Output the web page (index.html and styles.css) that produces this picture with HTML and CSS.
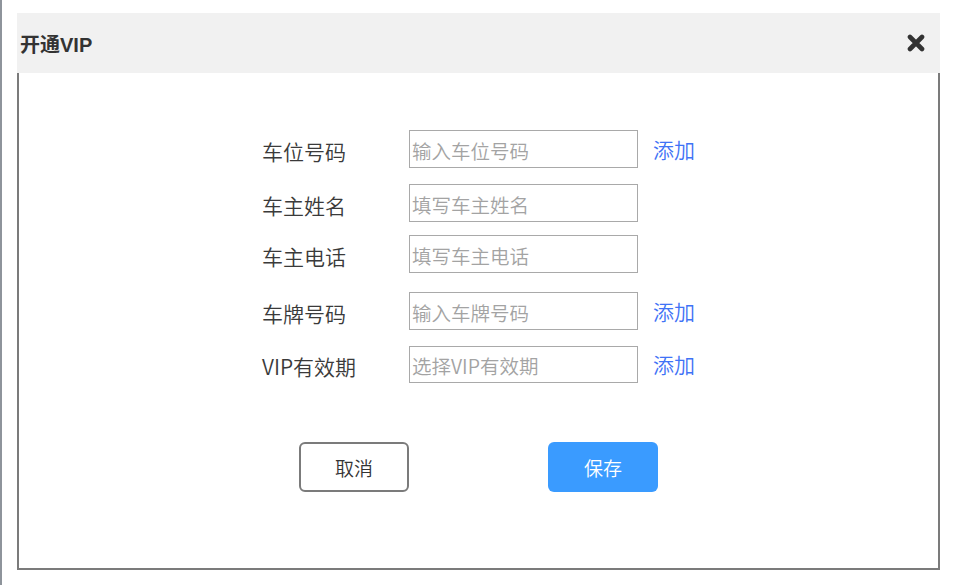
FILE: index.html
```html
<!DOCTYPE html>
<html lang="zh-CN">
<head>
<meta charset="utf-8">
<title>开通VIP</title>
<link rel="stylesheet" href="styles.css">
</head>
<body>
<div class="dialog">
  <div class="dialog-header">
    <span class="dialog-title">开通VIP</span>
    <button class="close-btn" type="button" aria-label="关闭">
      <svg width="18" height="18" viewBox="0 0 18 18"><path d="M3 3L15 15M15 3L3 15" stroke="#333" stroke-width="4.6" stroke-linecap="round" fill="none"/></svg>
    </button>
  </div>
  <div class="dialog-body">
    <form class="form">
      <div class="row">
        <label class="label">车位号码</label>
        <input class="field" type="text" placeholder="输入车位号码">
        <a class="link" href="#">添加</a>
      </div>
      <div class="row">
        <label class="label">车主姓名</label>
        <input class="field" type="text" placeholder="填写车主姓名">
      </div>
      <div class="row row-tight">
        <label class="label">车主电话</label>
        <input class="field" type="text" placeholder="填写车主电话">
      </div>
      <div class="row row-loose">
        <label class="label">车牌号码</label>
        <input class="field" type="text" placeholder="输入车牌号码">
        <a class="link" href="#">添加</a>
      </div>
      <div class="row row-last">
        <label class="label">VIP有效期</label>
        <input class="field field-short" type="text" placeholder="选择VIP有效期">
        <a class="link" href="#">添加</a>
      </div>
    </form>
    <div class="actions">
      <button class="btn btn-cancel" type="button">取消</button>
      <button class="btn btn-save" type="button">保存</button>
    </div>
  </div>
</div>
</body>
</html>
```
FILE: styles.css
```css
* { box-sizing: border-box; }
html, body { margin: 0; padding: 0; }
body {
  min-height: 585px;
  border-left: 2px solid #8e949b;
  padding: 13px 0 0 15px;
  background: #fff;
  font-family: "Microsoft YaHei", "Noto Sans CJK SC", "Liberation Sans", sans-serif;
  color: #333;
}
.dialog { width: 923px; }
.dialog-header {
  height: 60px;
  background: #f1f1f1;
  display: flex;
  align-items: center;
  justify-content: space-between;
  padding: 0 15px 0 3px;
}
.dialog-title {
  font-family: "Liberation Sans", "Noto Sans CJK SC", sans-serif;
  font-weight: bold;
  font-size: 20px;
  color: #333;
  padding-top: 1px;
}
.close-btn {
  border: 0;
  background: none;
  padding: 0;
  width: 18px;
  height: 18px;
  display: flex;
  cursor: pointer;
}
.dialog-body {
  height: 497px;
  border: 2px solid #7b7b7b;
  border-top: 0;
  padding-top: 57px;
}
.form {
  width: 433px;
  margin: 0 auto;
  display: flex;
  flex-direction: column;
  gap: 16px;
}
.row {
  display: flex;
  align-items: center;
  height: 38px;
}
.row-tight { margin-top: -3px; }
.row-loose { margin-top: 3px; }
.row-last { margin-top: -1px; }
.label {
  width: 147px;
  font-size: 21px;
  font-weight: 350;
  color: #3a3a3a;
  padding-top: 4px;
}
.field {
  width: 229px;
  height: 38px;
  border: 1px solid #a9a9a9;
  padding: 2px 2px 0;
  font-family: inherit;
  font-size: 19.5px;
  font-weight: 350;
  color: #333;
  outline: none;
}
.field-short { height: 37px; }
.field::placeholder { color: #a3a3a3; }
.link {
  margin-left: 15px;
  font-size: 21px;
  font-weight: 350;
  color: #3f73f6;
  text-decoration: none;
  padding-top: 0;
}
.actions {
  display: flex;
  justify-content: center;
  gap: 139px;
  margin-top: 59px;
}
.btn {
  width: 110px;
  height: 50px;
  border-radius: 6px;
  font-family: inherit;
  font-size: 19px;
  font-weight: 350;
  cursor: pointer;
}
.btn-cancel {
  background: #fff;
  border: 2px solid #7b7b7b;
  color: #333;
}
.btn-save {
  background: #3a9bff;
  border: 0;
  color: #fff;
}
```
